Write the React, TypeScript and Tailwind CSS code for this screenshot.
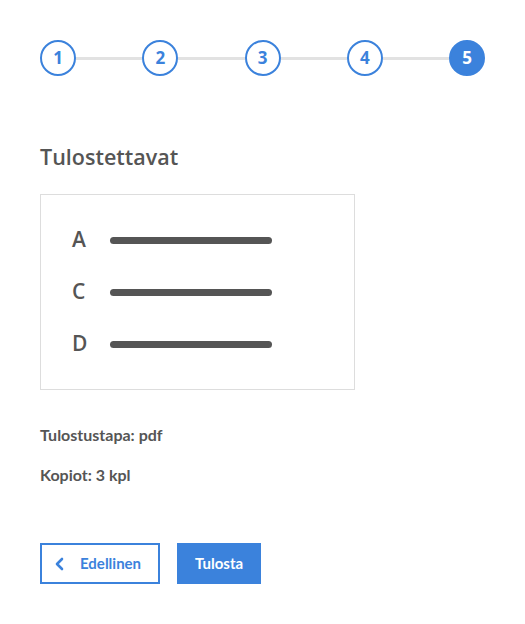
import React from "react";

const steps = [1, 2, 3, 4, 5];
const items = ["A", "C", "D"];

export default function App() {
  return (
    <div className="min-h-screen bg-white px-10 pt-10 text-[#555]" style={{ fontFamily: "'Open Sans', sans-serif" }}>
      <div className="flex items-center">
        {steps.map((s, i) => (
          <React.Fragment key={s}>
            {i > 0 && <div className="h-[3px] flex-1 bg-[#e2e2e2]" />}
            <div
              className={`flex h-9 w-9 items-center justify-center rounded-full border-2 border-[#3b82dc] text-[17px] font-bold ${
                s === 5 ? "bg-[#3b82dc] text-white" : "bg-white text-[#3b82dc]"
              }`}
            >
              {s}
            </div>
          </React.Fragment>
        ))}
      </div>

      <h2 className="mt-[67px] text-[21.5px] leading-7 font-semibold">Tulostettavat</h2>

      <div className="mt-[23px] w-[315px] border border-[#dddddd] py-[19px] pl-[31px]">
        {items.map((it) => (
          <div key={it} className="flex h-[52px] items-center">
            <span className="w-[38px] text-[21px] font-semibold">{it}</span>
            <div className="h-[7px] w-[162px] rounded-full bg-[#555]" />
          </div>
        ))}
      </div>

      <div style={{ fontFamily: "Lato, sans-serif" }}>
        <p className="mt-[35px] text-[16px] leading-5 font-bold">Tulostustapa: pdf</p>
        <p className="mt-5 text-[16px] leading-5 font-bold">Kopiot: 3 kpl</p>

        <div className="mt-[58px] flex gap-[17px]">
          <button className="flex h-[41px] w-[120px] items-center gap-[14px] border-2 border-[#3b82dc] pl-[12px] text-[15px] font-bold text-[#3b82dc]">
            <svg width="12" height="14" viewBox="0 0 12 14" fill="none">
              <path d="M8 2 L3 7 L8 12" stroke="#3b82dc" strokeWidth="2.6" strokeLinecap="round" strokeLinejoin="round" />
            </svg>
            Edellinen
          </button>
          <button className="h-[41px] w-[84px] bg-[#3b82dc] text-[15px] font-bold text-white">Tulosta</button>
        </div>
      </div>
    </div>
  );
}
